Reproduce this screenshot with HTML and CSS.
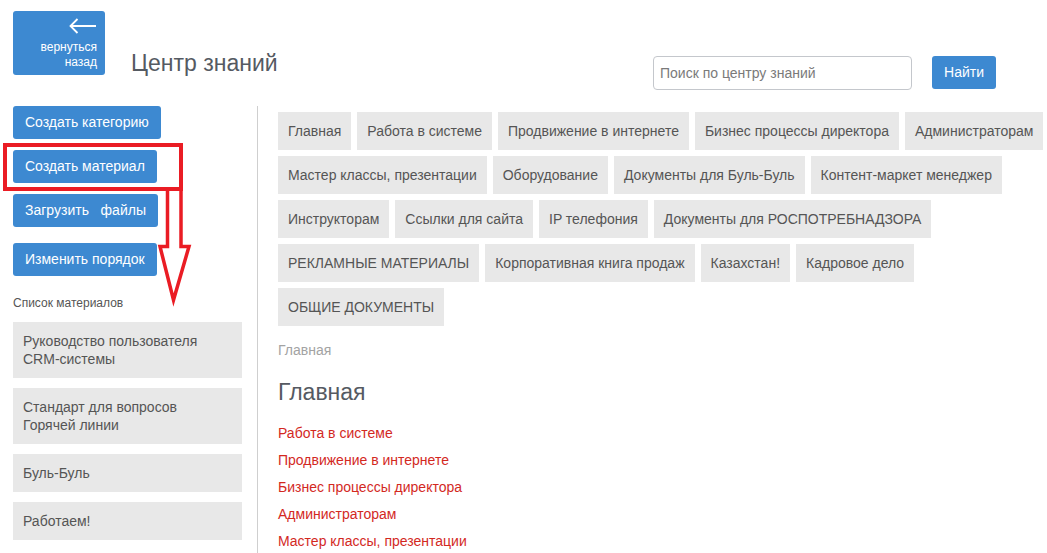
FILE: index.html
```html
<!DOCTYPE html>
<html lang="ru">

<head>
  <meta charset="UTF-8">
  <meta name="viewport" content="width=device-width, initial-scale=1.0">
  <title>Центр знаний</title>
  <link rel="stylesheet" href="styles.css">
</head>

<body>
  <header class="top">
    <a class="back" href="javascript:void(0)">
      <svg class="back-arrow" width="27" height="16" viewBox="0 0 27 16">
        <path d="M1.5 8 H27 M8.5 1 L1.5 8 L8.5 15" fill="none" stroke="#fff" stroke-width="1.8" />
      </svg>
      <span class="back-text">вернуться<br>назад</span>
    </a>
    <h1 class="title">Центр знаний</h1>
    <form class="search" onsubmit="return false">
      <input class="search-input" type="text" placeholder="Поиск по центру знаний">
      <button class="btn search-btn">Найти</button>
    </form>
  </header>

  <div class="main">
    <aside class="side">
      <a class="btn side-btn" href="javascript:void(0)">Создать категорию</a>
      <a class="btn side-btn" href="javascript:void(0)">Создать материал</a>
      <a class="btn side-btn" href="javascript:void(0)">Загрузить&nbsp;&nbsp; файлы</a>
      <a class="btn side-btn side-btn-last" href="javascript:void(0)">Изменить порядок</a>
      <p class="side-label">Список материалов</p>
      <a class="card" href="javascript:void(0)">Руководство пользователя<br>CRM-системы</a>
      <a class="card" href="javascript:void(0)">Стандарт для вопросов<br>Горячей линии</a>
      <a class="card" href="javascript:void(0)">Буль-Буль</a>
      <a class="card" href="javascript:void(0)">Работаем!</a>
    </aside>

    <section class="content">
      <nav class="tags">
        <a class="tag" href="javascript:void(0)">Главная</a>
        <a class="tag" href="javascript:void(0)">Работа в системе</a>
        <a class="tag" href="javascript:void(0)">Продвижение в интернете</a>
        <a class="tag" href="javascript:void(0)">Бизнес процессы директора</a>
        <a class="tag" href="javascript:void(0)">Администраторам</a>
        <a class="tag" href="javascript:void(0)">Мастер классы, презентации</a>
        <a class="tag" href="javascript:void(0)">Оборудование</a>
        <a class="tag" href="javascript:void(0)">Документы для Буль-Буль</a>
        <a class="tag" href="javascript:void(0)">Контент-маркет менеджер</a>
        <a class="tag" href="javascript:void(0)">Инструкторам</a>
        <a class="tag" href="javascript:void(0)">Ссылки для сайта</a>
        <a class="tag" href="javascript:void(0)">IP телефония</a>
        <a class="tag" href="javascript:void(0)">Документы для РОСПОТРЕБНАДЗОРА</a>
        <a class="tag" href="javascript:void(0)">РЕКЛАМНЫЕ МАТЕРИАЛЫ</a>
        <a class="tag" href="javascript:void(0)">Корпоративная книга продаж</a>
        <a class="tag" href="javascript:void(0)">Казахстан!</a>
        <a class="tag" href="javascript:void(0)">Кадровое дело</a>
        <a class="tag" href="javascript:void(0)">ОБЩИЕ ДОКУМЕНТЫ</a>
      </nav>

      <div class="crumbs">Главная</div>
      <h2 class="heading">Главная</h2>

      <ul class="links">
        <li><a href="javascript:void(0)">Работа в системе</a></li>
        <li><a href="javascript:void(0)">Продвижение в интернете</a></li>
        <li><a href="javascript:void(0)">Бизнес процессы директора</a></li>
        <li><a href="javascript:void(0)">Администраторам</a></li>
        <li><a href="javascript:void(0)">Мастер классы, презентации</a></li>
      </ul>
    </section>
  </div>

  <!-- пометка поверх скриншота -->
  <svg class="mark" width="200" height="310" viewBox="0 0 200 310">
    <rect x="5" y="145" width="176" height="44" fill="none" stroke="#ea1c24" stroke-width="4" />
    <path d="M167.5 189 V246.5 H160 L173.5 300 L189 246.5 H181 V189" fill="none" stroke="#ea1c24"
      stroke-width="3.5" stroke-linejoin="miter" />
  </svg>
</body>

</html>
```

FILE: styles.css
```css
body {
  margin: 0;
  padding: 11px 0 0 13px;
  position: relative;
  font-family: "Liberation Sans", Arial, sans-serif;
  font-size: 14px;
  color: #555;
  background: #fff;
}

a {
  text-decoration: none;
}

.top {
  display: flex;
  align-items: flex-start;
  padding-right: 51px;
}

.back {
  width: 92px;
  height: 64px;
  box-sizing: border-box;
  padding: 7px 8px 0 0;
  display: flex;
  flex-direction: column;
  align-items: flex-end;
  background: #3d89d1;
  border-radius: 3px;
  color: #fff;
}

.back-arrow {
  display: block;
  margin-right: 1px;
}

.back-text {
  margin-top: 6px;
  font-size: 12px;
  line-height: 15px;
  text-align: right;
}

.title {
  margin: 38px 0 0 26px;
  font-size: 23px;
  line-height: 28px;
  font-weight: normal;
  color: #555a62;
}

.search {
  display: flex;
  align-items: flex-start;
  margin: 45px 0 0 auto;
}

.search-input {
  width: 259px;
  height: 34px;
  box-sizing: border-box;
  padding: 0 6px;
  border: 1px solid #c4c7cc;
  border-radius: 4px;
  font-family: inherit;
  font-size: 14px;
  color: #555;
}

.search-input::placeholder {
  color: #7a7a7a;
}

.btn {
  display: inline-block;
  background: #3d89d1;
  color: #fff;
  font-family: inherit;
  font-size: 14px;
  line-height: 21px;
  padding: 6px 12px;
  border: 0;
  border-radius: 3px;
}

.search-btn {
  margin-left: 20px;
  width: 64px;
  padding: 6px 0;
  text-align: center;
}

.main {
  display: flex;
  margin-top: 16px;
}

.side {
  width: 229px;
  padding-right: 15px;
  border-right: 1px solid #cfcfcf;
  min-height: 447px;
  display: flex;
  flex-direction: column;
  align-items: flex-start;
}

.side-btn {
  margin-bottom: 11px;
}

.side-btn-last {
  margin-top: 5px;
}

.side-label {
  margin: 8px 0 11px;
  font-size: 12px;
  line-height: 16px;
  color: #555;
}

.card {
  align-self: stretch;
  background: #e8e8e8;
  color: #555;
  padding: 10px 10px;
  line-height: 18px;
  margin-bottom: 10px;
}

.content {
  flex: 1;
  padding: 6px 0 0 20px;
}

.tags {
  display: flex;
  flex-wrap: wrap;
  gap: 6px;
}

.tag {
  height: 38px;
  line-height: 38px;
  padding: 0 10px;
  background: #e8e8e8;
  color: #555;
  white-space: nowrap;
}

.crumbs {
  margin-top: 14px;
  line-height: 20px;
  color: #a3a3a3;
}

.heading {
  margin: 18px 0 0;
  font-size: 23px;
  line-height: 28px;
  font-weight: normal;
  color: #555a62;
}

.links {
  list-style: none;
  margin: 14px 0 0;
  padding: 0;
}

.links li {
  line-height: 27px;
}

.links a {
  color: #d3291f;
}

.mark {
  position: absolute;
  left: 0;
  top: 0;
  pointer-events: none;
}
```
